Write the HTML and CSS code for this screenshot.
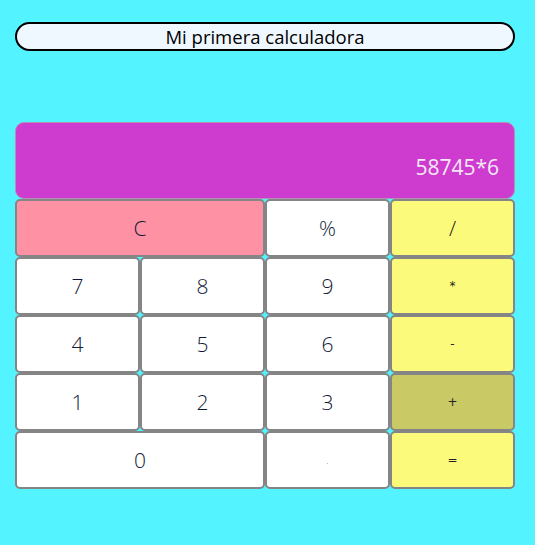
FILE: index.html
```html
<!DOCTYPE html>
<html lang="es">
<head>
<meta charset="utf-8">
<title>Mi primera calculadora</title>
<link rel="stylesheet" href="styles.css">
</head>
<body>
<main class="page">
  <h1 class="title">Mi primera calculadora</h1>
  <section class="calc">
    <div class="display">58745*6</div>
    <div class="keys">
      <button class="key key-clear span2">C</button>
      <button class="key">%</button>
      <button class="key op big">/</button>
      <button class="key">7</button>
      <button class="key">8</button>
      <button class="key">9</button>
      <button class="key op">*</button>
      <button class="key">4</button>
      <button class="key">5</button>
      <button class="key">6</button>
      <button class="key op">-</button>
      <button class="key">1</button>
      <button class="key">2</button>
      <button class="key">3</button>
      <button class="key op active">+</button>
      <button class="key span2">0</button>
      <button class="key tiny">.</button>
      <button class="key op">=</button>
    </div>
  </section>
</main>
</body>
</html>
```
FILE: styles.css
```css
html, body {
  margin: 0;
  padding: 0;
  background: #53f4ff;
}
.page {
  padding: 22px 20px 0 15px;
  width: 500px;
}
.title {
  margin: 0;
  height: 29px;
  box-sizing: border-box;
  border: 2px solid #000;
  border-radius: 15px;
  background: #f0f8ff;
  font-family: "Open Sans", sans-serif;
  font-weight: 400;
  font-size: 18.5px;
  line-height: 25px;
  text-align: center;
  color: #000;
}
.calc {
  margin-top: 71px;
  display: flex;
  flex-direction: column;
}
.display {
  height: 77px;
  box-sizing: border-box;
  background: #cd3bcf;
  border: 1px solid #b58fb7;
  border-radius: 9px;
  color: #f6e8f6;
  font-family: "Open Sans", sans-serif;
  font-weight: 400;
  font-size: 21px;
  display: flex;
  align-items: center;
  justify-content: flex-end;
  padding: 12px 15px 0 0;
}
.keys {
  display: grid;
  grid-template-columns: repeat(4, 125px);
  grid-auto-rows: 58px;
}
.key {
  margin: 0;
  box-sizing: border-box;
  border: 2px solid #858585;
  border-radius: 5px;
  background: #fff;
  color: #101a36;
  font-family: "Open Sans", sans-serif;
  font-weight: 300;
  font-size: 21px;
  padding: 0;
  cursor: pointer;
}
.span2 {
  grid-column: span 2;
}
.key-clear {
  background: #ff91a4;
}
.op {
  background: #fcfa7b;
  font-family: "DejaVu Sans", sans-serif;
  font-weight: 400;
  font-size: 12px;
  color: #222;
}
.op.big {
  font-family: "Open Sans", sans-serif;
  font-weight: 300;
  font-size: 21px;
}
.active {
  background: #c9c965;
}
.tiny {
  font-size: 8px;
  color: #600;
}
```
